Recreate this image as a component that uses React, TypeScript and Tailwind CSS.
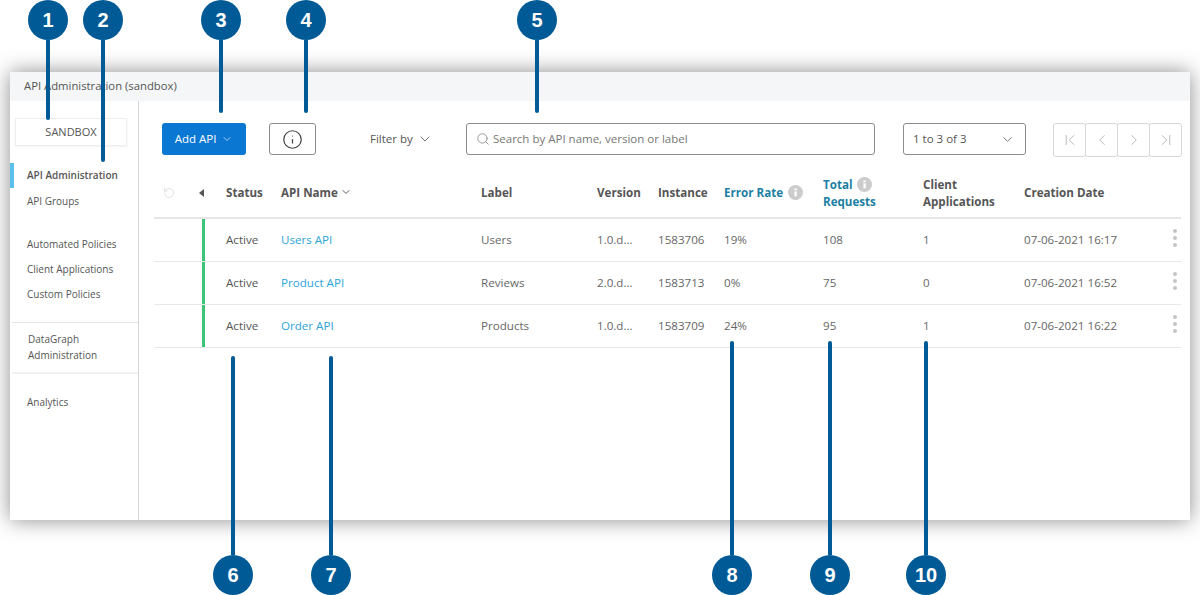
import React from "react";
import { ChevronDown, ChevronFirst, ChevronLast, ChevronLeft, ChevronRight, Info, Search, RotateCcw } from "lucide-react";

const font = "[font-family:'Open_Sans',sans-serif]";
const cols = "grid grid-cols-[45px_27px_55px_200px_116px_61px_66px_99px_100px_101px_1fr]";

function TopPin({ n, x, end }: { n: number; x: number; end: number }) {
  return (
    <div className="absolute top-0 flex flex-col items-center w-10" style={{ left: x - 20 }}>
      <div className="w-10 h-10 rounded-full bg-[#005a96] flex items-center justify-center text-white text-[20px] font-bold [font-family:'Liberation_Sans',sans-serif]">{n}</div>
      <div className="w-1 bg-[#005a96] rounded-b-sm" style={{ height: end - 40 }} />
    </div>
  );
}

function BottomPin({ n, x, start }: { n: number; x: number; start: number }) {
  return (
    <div className="absolute bottom-0 flex flex-col items-center w-10" style={{ left: x - 20 }}>
      <div className="w-1 bg-[#005a96] rounded-t-sm" style={{ height: 555 - start }} />
      <div className="w-10 h-10 rounded-full bg-[#005a96] flex items-center justify-center text-white text-[20px] font-bold [font-family:'Liberation_Sans',sans-serif]">{n}</div>
    </div>
  );
}

function SmallInfo() {
  return (
    <svg width="15" height="15" viewBox="0 0 14 14" className="inline-block shrink-0">
      <circle cx="7" cy="7" r="7" fill="#cccccc" />
      <rect x="6" y="6" width="2.2" height="4.6" fill="#fff" />
      <rect x="6" y="3.2" width="2.2" height="1.8" fill="#fff" />
    </svg>
  );
}

function NavItem({ children, className = "" }: { children: React.ReactNode; className?: string }) {
  return <div className={"text-[10px] leading-4 text-[#555] " + className}>{children}</div>;
}

function PagerBtn({ children }: { children: React.ReactNode }) {
  return (
    <div className="w-[33px] h-[34px] -ml-px first:ml-0 border border-[#d8d8d8] rounded-[3px] flex items-center justify-center text-[#b5b5b5] bg-white">
      {children}
    </div>
  );
}

const rows = [
  { name: "Users API", label: "Users", version: "1.0.d...", inst: "1583706", err: "19%", total: "108", apps: "1", date: "07-06-2021 16:17" },
  { name: "Product API", label: "Reviews", version: "2.0.d...", inst: "1583713", err: "0%", total: "75", apps: "0", date: "07-06-2021 16:52" },
  { name: "Order API", label: "Products", version: "1.0.d...", inst: "1583709", err: "24%", total: "95", apps: "1", date: "07-06-2021 16:22" },
];

export default function App() {
  return (
    <div className={"relative h-[595px] w-[1200px] overflow-hidden bg-white pt-[72px] pl-[10px] " + font}>
      <div className="w-[1180px] h-[448px] bg-white shadow-[0_0_20px_rgba(0,0,0,0.45)] flex flex-col">
        <div className="h-[29px] shrink-0 bg-[#f4f6f7] flex items-center pl-[14px] text-[11.3px] text-[#555]">
          API Administration (sandbox)
        </div>
        <div className="flex flex-1 min-h-0">
          <aside className="w-[129px] shrink-0 border-r border-[#d5d5d5] flex flex-col pt-[17px]">
            <div className="ml-[5px] w-[112px] h-[28px] border border-[#eeeeee] shadow-[0_1px_2px_rgba(0,0,0,0.06)] flex items-center justify-center text-[11px] text-[#555]">
              SANDBOX
            </div>
            <div className="mt-[17px] h-[25px] border-l-[4px] border-[#5bc0eb] pl-[13px] flex items-center pb-[2px]">
              <NavItem className="font-semibold">API Administration</NavItem>
            </div>
            <NavItem className="ml-[17px] mt-[5px]">API Groups</NavItem>
            <NavItem className="ml-[17px] mt-[27px]">Automated Policies</NavItem>
            <NavItem className="ml-[17px] mt-[9px]">Client Applications</NavItem>
            <NavItem className="ml-[17px] mt-[9px]">Custom Policies</NavItem>
            <div className="mt-[20px] ml-[2px] border-t border-[#e4e4e4] pl-[16px] pt-[8px] pb-[1px]">
              <NavItem>DataGraph</NavItem>
              <NavItem>Administration</NavItem>
            </div>
            <div className="mt-[8px] ml-[2px] border-t-2 border-[#f0f0f0]" />
            <NavItem className="ml-[17px] mt-[20px]">Analytics</NavItem>
          </aside>

          <main className="flex-1 min-w-0 pt-[22px]">
            <div className="flex items-start pl-[23px]">
              <div className="w-[84px] h-[32px] rounded-[3px] bg-[#0a78d2] text-white text-[11.5px] flex items-center justify-center gap-[5px]">
                Add API <ChevronDown size={12} strokeWidth={1.25} />
              </div>
              <div className="ml-[23px] w-[47px] h-[32px] rounded-[3px] border border-[#8c8c8c] flex items-center justify-center text-[#444]">
                <Info size={21} strokeWidth={1.4} />
              </div>
              <div className="ml-[54px] w-[60px] h-[32px] flex items-center gap-[5px] text-[11.5px] text-[#555] whitespace-nowrap">
                Filter by <ChevronDown size={16} strokeWidth={1.25} className="shrink-0 -ml-[1px]" />
              </div>
              <div className="ml-[36px] w-[409px] h-[32px] rounded-[3px] border border-[#8c8c8c] flex items-center pl-[9px] gap-[3px] text-[11.5px] text-[#777]">
                <Search size={14} strokeWidth={1.25} /> Search by API name, version or label
              </div>
              <div className="ml-[28px] w-[123px] h-[32px] rounded-[3px] border border-[#8c8c8c] flex items-center justify-between pl-[9px] pr-[10px] text-[11.5px] text-[#555]">
                1 to 3 of 3 <ChevronDown size={15} strokeWidth={1.25} />
              </div>
              <div className="ml-[27px] flex">
                <PagerBtn><ChevronFirst size={18} strokeWidth={1.25} /></PagerBtn>
                <PagerBtn><ChevronLeft size={18} strokeWidth={1.25} /></PagerBtn>
                <PagerBtn><ChevronRight size={18} strokeWidth={1.25} /></PagerBtn>
                <PagerBtn><ChevronLast size={18} strokeWidth={1.25} /></PagerBtn>
              </div>
            </div>

            <div className="ml-[15px] w-[1027px] mt-[15px]">
              <div className={cols + " h-[47px] pb-[4px] items-center border-b-2 border-[#e6e6e6] text-[11.6px] font-bold text-[#555]"}>
                <div className="pl-[9px] text-[#cfcfcf]"><RotateCcw size={12} strokeWidth={1.25} /></div>
                <div>
                  <svg width="5" height="8" viewBox="0 0 5 8"><path d="M5 0v8L0 4z" fill="#555" /></svg>
                </div>
                <div>Status</div>
                <div className="flex items-center gap-[2px] whitespace-nowrap">API Name <ChevronDown size={12} strokeWidth={1.75} className="text-[#444]" /></div>
                <div>Label</div>
                <div>Version</div>
                <div>Instance</div>
                <div className="flex items-center gap-[5px] text-[#1c7fa3] whitespace-nowrap">Error Rate <SmallInfo /></div>
                <div className="leading-[17px] text-[#1c7fa3]">
                  <div className="flex items-center gap-[5px]">Total <SmallInfo /></div>
                  <div>Requests</div>
                </div>
                <div className="leading-[17px]">Client<br />Applications</div>
                <div>Creation Date</div>
              </div>
              {rows.map((r) => (
                <div key={r.name} className={cols + " h-[43px] items-center border-b border-[#e8e8e8] text-[11.6px] text-[#666]"}>
                  <div />
                  <div className="self-stretch pl-[3px]"><div className="w-[3px] h-full bg-[#3cc57a]" /></div>
                  <div className="text-[#555]">Active</div>
                  <div className="text-[#2ba3d8]">{r.name}</div>
                  <div>{r.label}</div>
                  <div>{r.version}</div>
                  <div>{r.inst}</div>
                  <div>{r.err}</div>
                  <div>{r.total}</div>
                  <div>{r.apps}</div>
                  <div className="flex items-center justify-between pr-[4px]">
                    <span>{r.date}</span>
                    <span className="flex flex-col gap-[3px] -mt-[4px]">
                      <span className="w-[4px] h-[4px] rounded-full bg-[#c4c4c4]" />
                      <span className="w-[4px] h-[4px] rounded-full bg-[#c4c4c4]" />
                      <span className="w-[4px] h-[4px] rounded-full bg-[#c4c4c4]" />
                    </span>
                  </div>
                </div>
              ))}
            </div>
          </main>
        </div>
      </div>

      <TopPin n={1} x={48} end={120} />
      <TopPin n={2} x={103} end={162} />
      <TopPin n={3} x={221} end={113} />
      <TopPin n={4} x={306} end={113} />
      <TopPin n={5} x={537} end={113} />
      <BottomPin n={6} x={233} start={356} />
      <BottomPin n={7} x={331} start={356} />
      <BottomPin n={8} x={732} start={341} />
      <BottomPin n={9} x={830} start={341} />
      <BottomPin n={10} x={926} start={341} />
    </div>
  );
}
